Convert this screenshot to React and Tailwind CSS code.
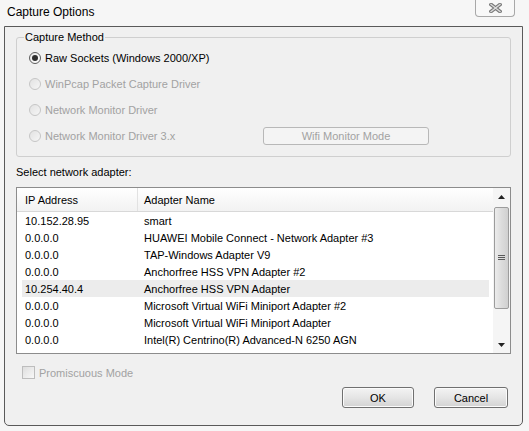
import React from "react";

const rows = [
  ["10.152.28.95", "smart"],
  ["0.0.0.0", "HUAWEI Mobile Connect - Network Adapter #3"],
  ["0.0.0.0", "TAP-Windows Adapter V9"],
  ["0.0.0.0", "Anchorfree HSS VPN Adapter #2"],
  ["10.254.40.4", "Anchorfree HSS VPN Adapter"],
  ["0.0.0.0", "Microsoft Virtual WiFi Miniport Adapter #2"],
  ["0.0.0.0", "Microsoft Virtual WiFi Miniport Adapter"],
  ["0.0.0.0", "Intel(R) Centrino(R) Advanced-N 6250 AGN"],
  ["169.254.171.242", "VMware Virtual Ethernet Adapter for VMnet1"],
];

function Radio({ checked, disabled, label }) {
  return (
    <div className="flex items-center">
      <div
        className={
          checked
            ? "w-[12px] h-[12px] rounded-full border border-[#5e5e5e] bg-linear-to-br from-[#e8e8e8] to-[#ffffff] flex items-center justify-center"
            : "w-[12px] h-[12px] rounded-full border border-[#c6c6c6] bg-linear-to-br from-[#e2e2e2] to-[#f6f6f6]"
        }
      >
        {checked && <div className="w-[6px] h-[6px] rounded-full bg-[#2e2e2e]" />}
      </div>
      <span className={"ml-[4px] leading-[14px] " + (disabled ? "text-[#a2a2a2]" : "text-black")}>{label}</span>
    </div>
  );
}

export default function App() {
  return (
    <div className="w-[529px] h-[431px] bg-[#f6f6f6] overflow-hidden text-[11px] text-black font-['Liberation_Sans',Arial,sans-serif]">
      {/* Title bar */}
      <div className="h-[26px] flex items-start">
        <span className="pl-[7px] pt-[5px] text-[12px] leading-[14px] text-black">Capture Options</span>
        <div className="ml-auto mr-[14px] w-[40px] h-[17px] border border-t-0 border-[#a8a8a8] rounded-b-[4px] bg-[#f8f8f8] flex items-center justify-center">
          <svg width="13" height="10" viewBox="0 0 13 10">
            <path d="M2 1.5 L11 8.5 M11 1.5 L2 8.5" stroke="#7a7a7a" strokeWidth="3.6" strokeLinecap="square" fill="none" />
            <path d="M2 1.5 L11 8.5 M11 1.5 L2 8.5" stroke="#dcdcdc" strokeWidth="1.4" strokeLinecap="square" fill="none" />
          </svg>
        </div>
      </div>

      {/* Client frame */}
      <div className="ml-[4px] w-[519px] h-[400px] border border-[#5a5a5a] rounded-b-[5px] bg-[#f0f0f0] flex flex-col">
        {/* Group box */}
        <div className="mt-[10px] ml-[11px] w-[495px] h-[120px] border border-[#cfcfcf] rounded-[3px] relative pt-[7px] pl-[12px]">
          <span className="absolute left-[7px] top-[-8px] px-[1px] bg-[#f0f0f0] leading-[14px]">Capture Method</span>
          <div className="h-[26px] flex items-center">
            <Radio checked label="Raw Sockets (Windows 2000/XP)" />
          </div>
          <div className="h-[26px] flex items-center">
            <Radio disabled label="WinPcap Packet Capture Driver" />
          </div>
          <div className="h-[26px] flex items-center">
            <Radio disabled label="Network Monitor Driver" />
          </div>
          <div className="h-[26px] flex items-center">
            <div className="w-[234px]">
              <Radio disabled label="Network Monitor Driver 3.x" />
            </div>
            <div className="w-[166px] h-[18px] border border-[#b8b8b8] rounded-[3px] bg-[#f4f4f4] text-[#a2a2a2] flex items-center justify-center leading-[14px]">
              Wifi Monitor Mode
            </div>
          </div>
        </div>

        <div className="mt-[8px] ml-[11px] leading-[14px]">Select network adapter:</div>

        {/* List view */}
        <div className="mt-[8px] ml-[11px] w-[495px] h-[167px] border border-[#8c8c8c] bg-white flex">
          <div className="flex-1 flex flex-col overflow-hidden">
            <div className="h-[24px] flex border-b border-[#d8d8d8] bg-linear-to-b from-[#ffffff] to-[#f2f2f2] shrink-0">
              <div className="w-[121px] border-r border-[#e2e2e2] pl-[8px] flex items-center leading-[14px]">IP Address</div>
              <div className="pl-[6px] flex items-center leading-[14px]">Adapter Name</div>
            </div>
            <div className="flex-1 overflow-hidden pl-[5px] pr-[4px]">
              {rows.map(([ip, name], i) => (
                <div key={i} className={"h-[17px] flex items-center whitespace-nowrap " + (i === 4 ? "bg-[#ececec]" : "")}>
                  <div className="w-[122px] pl-[3px] leading-[14px]">{ip}</div>
                  <div className="leading-[14px]">{name}</div>
                </div>
              ))}
            </div>
          </div>
          {/* Scrollbar */}
          <div className="w-[17px] bg-[#f5f5f5] flex flex-col items-center">
            <div className="h-[17px] w-full flex items-center justify-center">
              <svg width="7" height="4" viewBox="0 0 7 4"><path d="M0 4 L3.5 0 L7 4 Z" fill="#222" /></svg>
            </div>
            <div className="mt-[2px] w-[15px] h-[102px] border border-[#9c9c9c] rounded-[2px] bg-linear-to-r from-[#ececec] via-[#dcdcdc] to-[#d0d0d0] flex items-center justify-center">
              <svg width="7" height="6" viewBox="0 0 7 6">
                <path d="M0 0.5 H7 M0 2.5 H7 M0 4.5 H7" stroke="#5a5a5a" strokeWidth="1" />
              </svg>
            </div>
            <div className="flex-1" />
            <div className="h-[17px] w-full flex items-center justify-center">
              <svg width="7" height="4" viewBox="0 0 7 4"><path d="M0 0 L7 0 L3.5 4 Z" fill="#222" /></svg>
            </div>
          </div>
        </div>

        {/* Promiscuous */}
        <div className="mt-[12px] ml-[17px] h-[13px] flex items-center">
          <div className="w-[13px] h-[13px] border border-[#bdbdbd] bg-linear-to-br from-[#dedede] to-[#f8f8f8]" />
          <span className="ml-[4px] text-[#a2a2a2] leading-[14px]">Promiscuous Mode</span>
        </div>

        {/* Buttons */}
        <div className="mt-[8px] flex justify-end pr-[14px] gap-[20px]">
          <div className="w-[72px] h-[21px] border border-[#707070] rounded-[3px] bg-linear-to-b from-[#f3f3f3] via-[#e5e5e5] to-[#d3d3d3] shadow-[inset_0_0_0_1px_#fbfbfb] flex items-center justify-center leading-[14px]">OK</div>
          <div className="w-[74px] h-[21px] border border-[#707070] rounded-[3px] bg-linear-to-b from-[#f3f3f3] via-[#e5e5e5] to-[#d3d3d3] shadow-[inset_0_0_0_1px_#fbfbfb] flex items-center justify-center leading-[14px]">Cancel</div>
        </div>
      </div>
    </div>
  );
}
